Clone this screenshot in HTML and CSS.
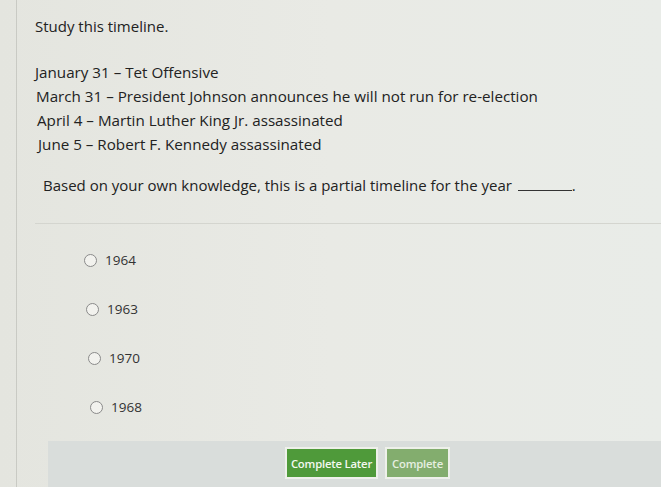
FILE: index.html
```html
<!DOCTYPE html>
<html>
<head>
<meta charset="utf-8">
<link rel="stylesheet" href="styles.css">
</head>
<body>
<div class="page">
  <div class="panel">
    <p class="intro">Study this timeline.</p>
    <div class="timeline">
      <div class="tl t1">January 31 – Tet Offensive</div>
      <div class="tl t2">March 31 – President Johnson announces he will not run for re-election</div>
      <div class="tl t3">April 4 – Martin Luther King Jr. assassinated</div>
      <div class="tl t4">June 5 – Robert F. Kennedy assassinated</div>
    </div>
    <p class="question">Based on your own knowledge, this is a partial timeline for the year <span class="blank"></span>.</p>
    <hr class="sep">
    <div class="options">
      <label class="opt o1"><span class="radio"></span>1964</label>
      <label class="opt o2"><span class="radio"></span>1963</label>
      <label class="opt o3"><span class="radio"></span>1970</label>
      <label class="opt o4"><span class="radio"></span>1968</label>
    </div>
    <div class="footer">
      <button class="btn primary">Complete Later</button>
      <button class="btn secondary">Complete</button>
    </div>
  </div>
</div>
</body>
</html>
```
FILE: styles.css
```css
html, body {
  margin: 0;
  padding: 0;
  width: 661px;
  height: 487px;
  overflow: hidden;
}
body {
  background: linear-gradient(90deg, #e4e5df 0%, #e9eae5 50%, #e9ece8 100%);
  font-family: "Open Sans", "Liberation Sans", sans-serif;
  color: #222222;
}
.page {
  padding-left: 16px;
  height: 487px;
}
.panel {
  border-left: 1px solid #c9cac4;
  height: 487px;
  padding-left: 18px;
  box-sizing: border-box;
  position: relative;
}
.intro {
  margin: 0;
  padding-top: 15px;
  font-size: 15px;
  line-height: 22px;
}
.timeline {
  margin-top: 23px;
  font-size: 15.2px;
  line-height: 24px;
}
.t2 { padding-left: 1px; }
.t3 { padding-left: 2px; }
.t4 { padding-left: 3px; }
.question {
  margin: 18px 0 0 8px;
  font-size: 15px;
  line-height: 22px;
}
.blank {
  display: inline-block;
  width: 54px;
  border-bottom: 1px solid #333;
  margin-left: 2px;
}
.sep {
  margin: 27px 0 0 0;
  border: 0;
  border-top: 1px solid #d4d5cf;
}
.options {
  display: flex;
  flex-direction: column;
  gap: 30px;
  margin-top: 27px;
  padding-left: 49px;
}
.opt {
  display: flex;
  align-items: center;
  gap: 8px;
  font-size: 13.5px;
  line-height: 19px;
  color: #333333;
}
.o2 { padding-left: 2px; }
.o3 { padding-left: 4px; }
.o4 { padding-left: 6px; }
.radio {
  width: 13px;
  height: 13px;
  border: 1.5px solid #8a8a8a;
  border-radius: 50%;
  box-sizing: border-box;
  background: #f2f2ee;
}
.footer {
  position: absolute;
  left: 31px;
  right: 0;
  bottom: 0;
  height: 46px;
  background: #d9dddb;
  display: flex;
  align-items: flex-start;
  padding-top: 6px;
  padding-left: 237px;
  gap: 7px;
  box-sizing: border-box;
}
.btn {
  font-family: "Open Sans", "Liberation Sans", sans-serif;
  font-size: 11.3px;
  font-weight: 600;
  letter-spacing: -0.2px;
  color: #f4f8f0;
  border: 2px solid #eef0ea;
  height: 32px;
  padding: 0;
  white-space: nowrap;
}
.primary {
  background: #4f9a3a;
  width: 93px;
}
.secondary {
  background: #83ad6e;
  width: 65px;
  color: #e6efe0;
}
```
